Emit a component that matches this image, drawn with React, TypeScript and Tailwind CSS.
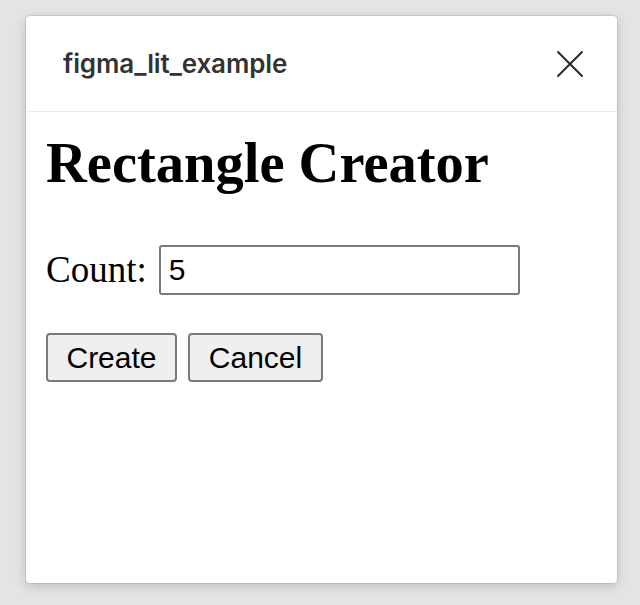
import React from "react";

function CloseIcon() {
  return (
    <svg width="28" height="28" viewBox="0 0 28 28" fill="none">
      <path d="M2 2L26 26M26 2L2 26" stroke="#2b2b2b" strokeWidth="2" strokeLinecap="round" />
    </svg>
  );
}

export default function App() {
  const [count, setCount] = React.useState("5");

  return (
    <div className="w-[640px] h-[605px] bg-[#e4e4e4] pl-[26px] pt-[16px]">
      <div className="w-[591px] h-[567px] bg-white rounded-[4px] shadow-[0_0_0_1px_rgba(0,0,0,0.08),0_3px_12px_rgba(0,0,0,0.18)] flex flex-col overflow-hidden">
        {/* Plugin window header */}
        <div className="h-[96px] shrink-0 flex items-center justify-between pl-[37px] pr-[33px] border-b border-[#ebebeb]">
          <span className="font-['Inter',sans-serif] font-semibold text-[26px] text-[#333333] tracking-[-0.1px]">
            figma_lit_example
          </span>
          <button className="flex items-center justify-center">
            <CloseIcon />
          </button>
        </div>

        {/* Plugin content */}
        <div className="flex flex-col px-[20px] font-['Liberation_Serif',serif] text-black">
          <h1 className="mt-[23px] text-[56.5px] leading-[56px] font-bold">Rectangle Creator</h1>

          <div className="mt-[54px] flex items-center gap-[12px]">
            <label className="text-[37px] leading-[36px]">Count:</label>
            <input
              value={count}
              onChange={(e) => setCount(e.target.value)}
              className="w-[361px] h-[50px] border-2 border-[#7a7a7a] rounded-[3px] pl-[8px] font-['Liberation_Sans',sans-serif] text-[30px] text-black outline-none"
            />
          </div>

          <div className="mt-[38px] flex gap-[11px] font-['Liberation_Sans',sans-serif]">
            <button className="w-[131px] h-[49px] border-2 border-[#7a7a7a] rounded-[4px] bg-[#efefef] text-[30px] text-black leading-none">
              Create
            </button>
            <button className="w-[135px] h-[49px] border-2 border-[#7a7a7a] rounded-[4px] bg-[#efefef] text-[30px] text-black leading-none">
              Cancel
            </button>
          </div>
        </div>
      </div>
    </div>
  );
}
